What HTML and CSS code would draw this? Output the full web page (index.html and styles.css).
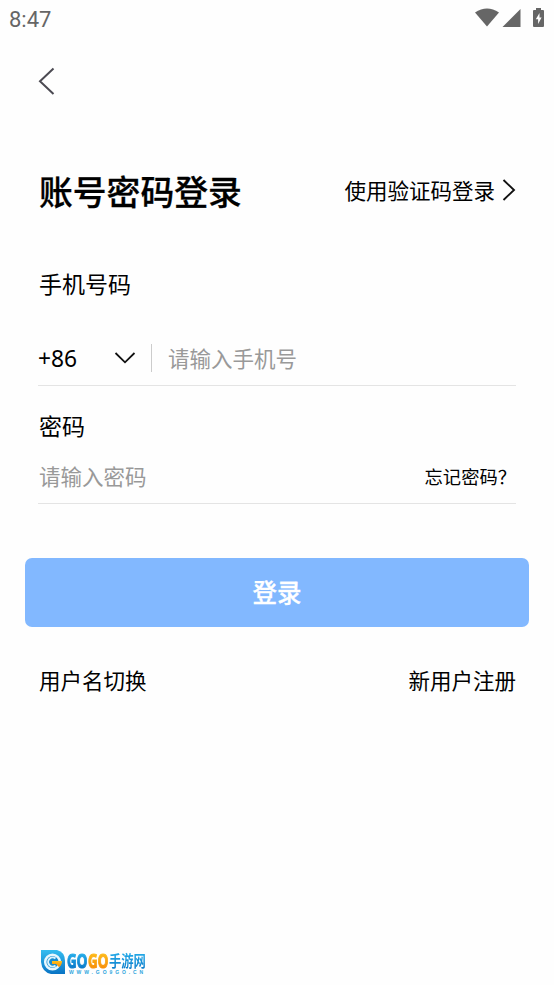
FILE: index.html
```html
<!DOCTYPE html>
<html lang="zh-CN">
<head>
<meta charset="utf-8">
<title>账号密码登录</title>
<link rel="stylesheet" href="styles.css">
</head>
<body>
<header class="status">
  <span class="clock">8:47</span>
  <svg class="status-icons" width="70" height="20" viewBox="0 0 70 20" fill="#666">
    <path d="M0 4.500Q12 -3.500 24 4.500L12 18.500Z"/>
    <path d="M45.500 1V19H27.500Z"/>
    <path fill-rule="evenodd" d="M61 0h5v2h2q1 0 1 1v15q0 1-1 1h-9q-1 0-1-1V3q0-1 1-1h2ZM64.500 5l-3.700 6.200h2.300V16l3.500-6.600h-2.100Z"/>
  </svg>
</header>
<nav class="nav">
  <svg width="18" height="30" viewBox="0 0 18 30" fill="none" stroke="#4b4a52" stroke-width="2"><path d="M15.500 2.500L2 15.300L15.500 28"/></svg>
</nav>
<main>
  <div class="heading">
    <h1>账号密码登录</h1>
    <a class="mode">使用验证码登录<svg width="14" height="24" viewBox="0 0 14 24" fill="none" stroke="#111" stroke-width="1.900"><path d="M1.500 2L12 12L1.500 22"/></svg></a>
  </div>
  <label class="label phone-label">手机号码</label>
  <div class="field phone">
    <span class="code">+86</span>
    <svg class="down" width="22" height="14" viewBox="0 0 22 14" fill="none" stroke="#111" stroke-width="1.800"><path d="M1.500 2L11 11.300L20.500 2"/></svg>
    <span class="divider"></span>
    <span class="hint">请输入手机号</span>
  </div>
  <label class="label pass-label">密码</label>
  <div class="field pass">
    <span class="hint">请输入密码</span>
    <a class="forgot">忘记密码？</a>
  </div>
  <button class="submit">登录</button>
  <div class="links"><a>用户名切换</a><a>新用户注册</a></div>
</main>
<footer class="brand">
  <svg class="mark" width="26" height="28" viewBox="0 0 26 28">
    <defs>
      <linearGradient id="blue" x1="0" y1="0" x2="0" y2="1"><stop offset="0" stop-color="#35bdf0"/><stop offset="1" stop-color="#0873c4"/></linearGradient>
      <linearGradient id="gold" x1="0" y1="0" x2="0" y2="1"><stop offset="0" stop-color="#ffc21c"/><stop offset="1" stop-color="#f78a08"/></linearGradient>
    </defs>
    <path d="M1 2H17Q25 4 25 13V26H11Q2 24 1 14Z" fill="url(#blue)"/>
    <circle cx="12.500" cy="14" r="7.300" fill="#168bd0" stroke="#e8f7fd" stroke-width="2.500"/>
    <path d="M15.500 10.500A4.500 4.500 0 1 0 15.500 17.500" fill="none" stroke="#d9f3fc" stroke-width="2"/>
    <path d="M12 13H22Q22 17 19 19L16 16H12Z" fill="url(#gold)"/>
  </svg>
  <div class="brand-text">
    <div class="brand-name"><span class="go">GO</span><span class="go gold">GO</span><span class="site">手游网</span></div>
    <div class="domain">WWW.GO9GO.CN</div>
  </div>
</footer>
</body>
</html>
```
FILE: styles.css
```css
* { box-sizing: border-box; }
body {
  margin: 0;
  height: 985px;
  display: flex;
  flex-direction: column;
  background: #fefefe;
  color: #000;
  font-family: "Noto Sans CJK SC", sans-serif;
}
.status {
  height: 38px;
  padding: 0 9px;
  display: flex;
  align-items: center;
  justify-content: space-between;
}
.clock { font: 400 22px/38px Roboto, sans-serif; color: #666; padding-top: 2px; }
.status-icons { margin: -2px 0 0; }
.nav { height: 88px; padding: 28px 38px; }
.nav svg, .mode svg { display: block; }
main { flex: 1; padding: 0 38px; }
.heading {
  height: 130px;
  display: flex;
  align-items: center;
  justify-content: space-between;
}
h1 { margin: 0 0 0 1px; font-size: 33.800px; line-height: 50px; font-weight: 500; -webkit-text-stroke: .3px #000; }
.mode { display: flex; align-items: center; gap: 7px; font-size: 21.500px; line-height: 32px; margin-top: -2px; }
.label { display: block; padding-left: 1px; font-size: 23px; line-height: 34px; }
.phone-label { margin-top: 10px; }
.field { display: flex; align-items: center; border-bottom: 1px solid #e4e4e4; }
.phone { height: 55px; margin-top: 31px; }
.code { width: 76px; padding-top: 2px; font: 22.800px/32px "Noto Sans", sans-serif; }
.divider { width: 1px; height: 28px; margin: 0 16px 0 15px; background: #ccc; }
.hint { font-size: 21.500px; line-height: 32px; color: #999; }
.pass-label { margin-top: 22px; }
.pass { height: 62px; padding: 7px 0 0 1px; justify-content: space-between; }
.forgot { font-size: 18.300px; }
.submit {
  display: block;
  width: 504px;
  height: 69px;
  margin: 54px -13px 0;
  padding: 0 0 1px;
  border: 0;
  border-radius: 7px;
  background: #82b8ff;
  color: #fff;
  font: 500 24.500px/66px "Noto Sans CJK SC", sans-serif;
  -webkit-text-stroke: .3px #fff;
}
.links { display: flex; justify-content: space-between; margin: 37px 0 0 1px; font-size: 21.500px; line-height: 32px; }
.brand { height: 37px; padding-left: 40px; display: flex; }
.brand-text { width: 80px; padding: 3px 0 0 1px; }
.brand-name { display: flex; height: 19px; white-space: nowrap; }
.go, .site { background: linear-gradient(#29b6f0, #0873c4); background-clip: text; color: transparent; transform-origin: left center; }
.go { width: 32px; margin-right: -11px; font: 700 20px/20px "Noto Sans", sans-serif; -webkit-text-stroke: 1.200px transparent; transform: scaleX(.67); }
.go.gold { background-image: linear-gradient(#ffc21c, #f78a08); }
.site { font: 700 12.300px/20px "Noto Sans CJK SC", sans-serif; transform: scaleY(1.250); }
.domain { padding-left: 2px; font: 700 5px/5px "Liberation Sans", sans-serif; letter-spacing: 2.900px; color: #2ea5dd; white-space: nowrap; }
```
